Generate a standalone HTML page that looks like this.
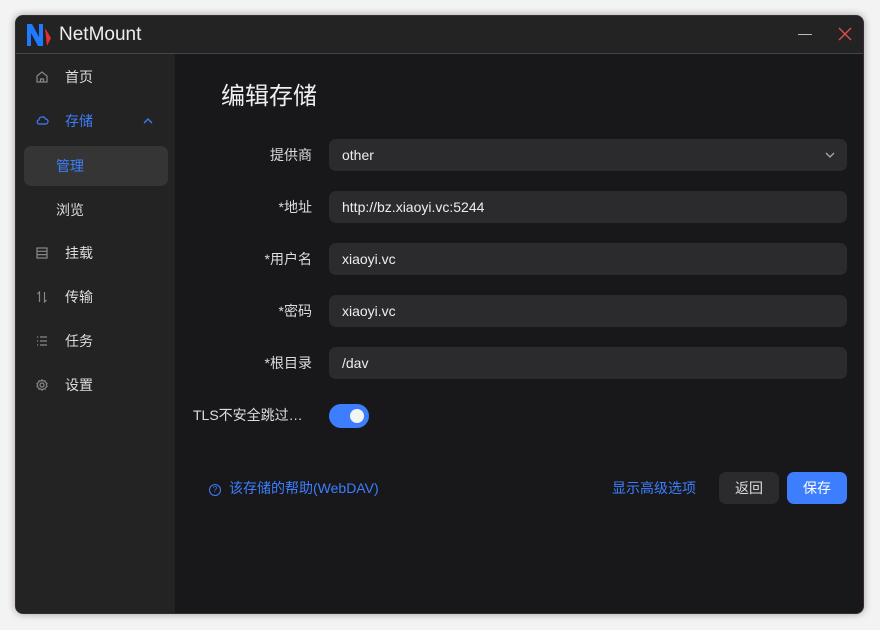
<!DOCTYPE html><html><head><meta charset="utf-8"><style>
body{margin:0;width:880px;height:630px;background:#f3f3f3;font-family:"Liberation Sans","Noto Sans CJK SC",sans-serif;overflow:hidden;position:relative}
.win{position:absolute;left:15px;top:15px;width:849px;height:599px;border-radius:8px;background:#18181a;overflow:hidden;box-shadow:0 0 8px rgba(0,0,0,.35);border:1px solid #3a2a30;box-sizing:border-box}
.tb{position:absolute;left:0;top:0;right:0;height:37px;background:#232323;border-bottom:1px solid #444}
.side{position:absolute;left:0;top:38px;width:159px;bottom:0;background:#232323}
.it{position:absolute;left:0;width:159px;height:40px;color:#ddd;font-size:14px;line-height:40px}
.it svg{position:absolute;left:20px;top:14px}
.it .t{position:absolute;left:49px}
.lab{position:absolute;right:551px;color:#ddd;font-size:14px;text-align:right;line-height:20px}
.inp{position:absolute;left:313px;width:518px;height:32px;background:#2b2b2e;border-radius:7px;color:#eee;font-size:14px;line-height:32px;text-indent:13px}
.btn{position:absolute;top:456px;height:32px;border-radius:7px;font-size:14px;line-height:32px;text-align:center}
</style></head><body>
<div class="win">
<div class="tb">
<svg style="position:absolute;left:10px;top:7px" width="26" height="24" viewBox="0 0 26 24"><path d="M1 1h5l7 13V1h4v22h-5L5 10v13H1z" fill="#1e7bff"/><path d="M19 5l6 10-4 8z" fill="#e03030"/></svg>
<div style="position:absolute;left:43px;top:8px;color:#eee;font-size:19px">NetMount</div>
<div style="position:absolute;left:782px;top:18px;width:14px;height:1px;background:#bbb"></div>
<svg style="position:absolute;left:822px;top:11px" width="14" height="14"><path d="M1 1L13 13M13 1L1 13" stroke="#e05050" stroke-width="1.3"/></svg>
</div>
<div class="side">
<div class="it" style="top:3px"><svg width="12" height="12" viewBox="0 0 12 12" fill="none" stroke="#888" stroke-width="1.2"><path d="M1 5L6 1l5 4v6H1z"/><path d="M4.5 11V8h3v3"/></svg><span class="t">首页</span></div>
<div class="it" style="top:47px;color:#3d7eff"><svg width="13" height="10" viewBox="0 0 13 10" fill="none" stroke="#3d7eff" stroke-width="1.2"><path d="M3.5 9h6a2.5 2.5 0 000-5 3.5 3.5 0 00-6.7 1A2 2 0 003.5 9z"/></svg><span class="t">存储</span><svg style="left:127px;top:17px" width="10" height="6"><path d="M1 5l4-4 4 4" stroke="#3d7eff" fill="none" stroke-width="1.3"/></svg></div>
<div style="position:absolute;left:8px;top:92px;width:144px;height:40px;background:#353535;border-radius:7px;color:#3d7eff;font-size:14px;line-height:40px;text-indent:32px">管理</div>
<div class="it" style="top:136px"><span class="t" style="left:40px">浏览</span></div>
<div class="it" style="top:179px"><svg width="12" height="12" viewBox="0 0 12 12" fill="none" stroke="#888" stroke-width="1.2"><rect x="1" y="1" width="10" height="10"/><path d="M1 4.3h10M1 7.6h10"/></svg><span class="t">挂载</span></div>
<div class="it" style="top:223px"><svg width="12" height="12" viewBox="0 0 12 12" fill="none" stroke="#888" stroke-width="1.2"><path d="M3.5 11V1L1.5 3M8.5 1v10l2-2"/></svg><span class="t">传输</span></div>
<div class="it" style="top:267px"><svg width="12" height="12" viewBox="0 0 12 12" fill="none" stroke="#888" stroke-width="1.2"><path d="M1 2h1.2M1 6h1.2M1 10h1.2M4 2h7M4 6h7M4 10h7"/></svg><span class="t">任务</span></div>
<div class="it" style="top:311px"><svg width="12" height="12" viewBox="0 0 12 12" fill="none" stroke="#888" stroke-width="1.2"><circle cx="6" cy="6" r="2"/><path d="M6 .8l1.2 1.3 1.8-.3.4 1.7 1.6.9-.6 1.6.6 1.6-1.6.9-.4 1.7-1.8-.3L6 11.2 4.8 9.9 3 10.2l-.4-1.7L1 7.6 1.6 6 1 4.4l1.6-.9L3 1.8l1.8.3z"/></svg><span class="t">设置</span></div>
</div>
<div style="position:absolute;left:205px;top:60px;color:#eee;font-size:24px">编辑存储</div>
<div class="lab" style="top:129px">提供商</div><div class="inp" style="top:123px">other<svg style="position:absolute;right:12px;top:13px" width="10" height="6"><path d="M1 1l4 4 4-4" stroke="#aaa" fill="none" stroke-width="1.3"/></svg></div>
<div class="lab" style="top:181px">*地址</div><div class="inp" style="top:175px">http://bz.xiaoyi.vc:5244</div>
<div class="lab" style="top:233px">*用户名</div><div class="inp" style="top:227px">xiaoyi.vc</div>
<div class="lab" style="top:285px">*密码</div><div class="inp" style="top:279px">xiaoyi.vc</div>
<div class="lab" style="top:337px">*根目录</div><div class="inp" style="top:331px">/dav</div>
<div style="position:absolute;left:177px;top:389px;color:#ddd;font-size:14px;line-height:20px">TLS不安全跳过…</div>
<div style="position:absolute;left:313px;top:388px;width:40px;height:24px;border-radius:12px;background:#3d7eff"><div style="position:absolute;right:5px;top:5px;width:14px;height:14px;border-radius:7px;background:#f4f4f4"></div></div>
<div style="position:absolute;left:193px;top:462px;color:#3d7eff;font-size:14px;line-height:20px"><span style="display:inline-block;width:10px;height:10px;border:1.2px solid #3d7eff;border-radius:50%;font-size:8px;line-height:10px;text-align:center;margin-right:8px;vertical-align:1px">?</span>该存储的帮助(WebDAV)</div>
<div style="position:absolute;left:596px;top:462px;color:#3d7eff;font-size:14px;line-height:20px">显示高级选项</div>
<div class="btn" style="left:703px;width:60px;background:#2b2b2e;color:#ddd">返回</div>
<div class="btn" style="left:771px;width:60px;background:#3d7eff;color:#fff">保存</div>
</div>
</body></html>
